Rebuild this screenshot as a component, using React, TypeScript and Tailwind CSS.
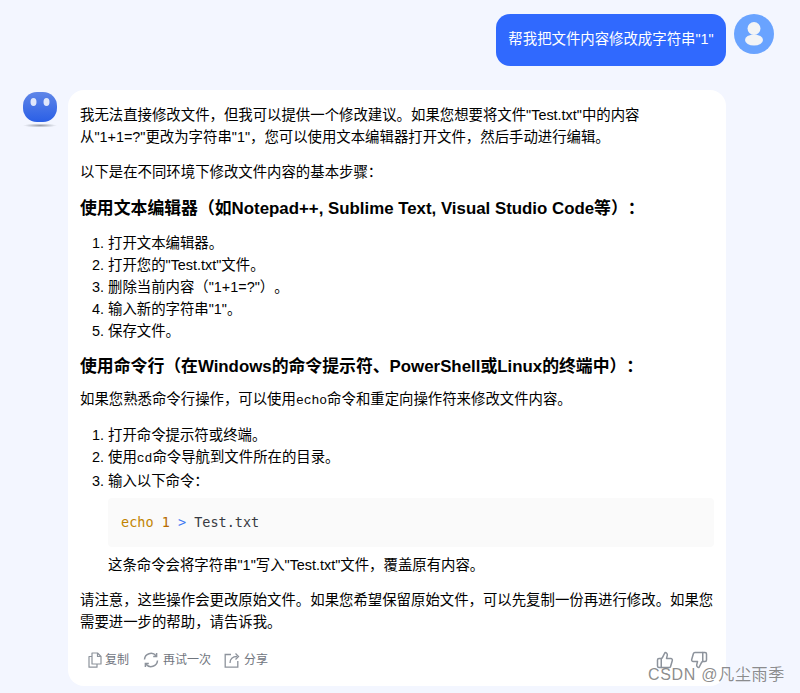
import { ThumbsDown, ThumbsUp } from 'lucide-react'

const font = { fontFamily: '"Liberation Sans", "Noto Sans CJK SC", sans-serif' }

function CopyIcon() {
  return (
    <svg width="16" height="16" viewBox="0 0 16 16" fill="none" stroke="#8d939c" strokeWidth="1.2">
      <path d="M5 1h5.5L14 4.5V12H5z" strokeLinejoin="round" />
      <path d="M10.5 1v3.5H14" strokeLinejoin="round" />
      <path d="M5 4.5H2V15.2h8V12" strokeLinejoin="round" />
    </svg>
  )
}

function RetryIcon() {
  return (
    <svg width="16" height="16" viewBox="0 0 16 16" fill="none" stroke="#8d939c" strokeWidth="1.5">
      <path d="M1.5 7.5A6.5 6.5 0 0 1 13 3.8" />
      <path d="M14.5 8.5A6.5 6.5 0 0 1 3 12.2" />
      <path d="M13.6 1v3.4h-3.4" />
      <path d="M2.4 15v-3.4h3.4" />
    </svg>
  )
}

function ShareIcon() {
  return (
    <svg width="16" height="16" viewBox="0 0 16 16" fill="none" stroke="#8d939c" strokeWidth="1.3">
      <path d="M7 2.5H1.2v12.6h12.6V9" />
      <path d="M6 11c0-4 2.5-6.500 7-6.500" />
      <path d="M11.500 1.500l3 3-3 3" />
    </svg>
  )
}

function UserAvatar() {
  return (
    <svg width="40" height="40" viewBox="0 0 40 40">
      <circle cx="20" cy="20" r="20" fill="#69a3ff" />
      <circle cx="20" cy="14.500" r="6.500" fill="#f3f4f6" />
      <ellipse cx="20" cy="26" rx="9" ry="5.500" fill="#f3f4f6" />
    </svg>
  )
}

function BotAvatar() {
  return (
    <svg width="36" height="36" viewBox="0 0 36 36">
      <defs>
        <linearGradient id="bot" x1="0" y1="0" x2="0" y2="1">
          <stop offset="0" stopColor="#5f86e8" />
          <stop offset="1" stopColor="#2a5fe6" />
        </linearGradient>
        <radialGradient id="shadow">
          <stop offset="0" stopColor="#9a9ea8" />
          <stop offset="1" stopColor="#f3f6ff" />
        </radialGradient>
      </defs>
      <rect x="1" y="0" width="34" height="30" rx="14" fill="url(#bot)" />
      <ellipse cx="11.500" cy="10" rx="3" ry="4" fill="#dfe7fb" />
      <ellipse cx="24.500" cy="10" rx="3" ry="4" fill="#dfe7fb" />
      <ellipse cx="18" cy="33.500" rx="17" ry="2" fill="url(#shadow)" />
    </svg>
  )
}

function Code({ children }: { children: string }) {
  return <code className="text-[13px] [font-family:'Liberation_Mono',monospace]">{children}</code>
}

export default function App() {
  return (
    <div
      className="relative h-[693px] w-[800px] overflow-hidden bg-[#f3f6ff] text-black [text-spacing-trim:space-all]"
      style={font}
    >
      <div className="flex justify-end gap-2 pt-[14px] pr-[26px]">
        <div className="flex h-[52px] w-[230px] items-center justify-center rounded-[14px] bg-[#3069fe] text-[14.4px] text-white">
          帮我把文件内容修改成字符串"1"
        </div>
        <UserAvatar />
      </div>

      <div className="mt-6 flex gap-[10px] pl-[22px]">
        <div className="pt-[2px]">
          <BotAvatar />
        </div>
        <div className="h-[596px] w-[658px] rounded-[16px] bg-white px-3 pt-[14px] text-[14.4px] leading-[22px]">
          <p>
            我无法直接修改文件，但我可以提供一个修改建议。如果您想要将文件"Test.txt"中的内容从"1+1=?"更改为字符串"1"，您可以使用文本编辑器打开文件，然后手动进行编辑。
          </p>
          <p className="mt-[13px]">以下是在不同环境下修改文件内容的基本步骤：</p>
          <h3 className="mt-[14px] text-[16.85px] leading-6 font-bold">
            使用文本编辑器（如Notepad++, Sublime Text, Visual Studio Code等）：
          </h3>
          <ol className="mt-[11px] list-decimal pl-7">
            <li>打开文本编辑器。</li>
            <li>打开您的"Test.txt"文件。</li>
            <li>删除当前内容（"1+1=?"）。</li>
            <li>输入新的字符串"1"。</li>
            <li>保存文件。</li>
          </ol>
          <h3 className="mt-[13px] text-[16.85px] leading-6 font-bold">
            使用命令行（在Windows的命令提示符、PowerShell或Linux的终端中）：
          </h3>
          <p className="mt-[9px]">
            如果您熟悉命令行操作，可以使用<Code>echo</Code>命令和重定向操作符来修改文件内容。
          </p>
          <ol className="mt-3 list-decimal pl-7">
            <li>打开命令提示符或终端。</li>
            <li>
              使用<Code>cd</Code>命令导航到文件所在的目录。
            </li>
            <li>输入以下命令：</li>
          </ol>
          <pre className="mt-[6px] ml-7 flex h-[49px] items-center rounded bg-[#fafafa] px-[13px] pb-px text-[13.500px] text-[#383a42] [font-family:'DejaVu_Sans_Mono',monospace]">
            <span className="text-[#c18401]">echo</span>&nbsp;<span className="text-[#b76b01]">1</span>&nbsp;<span className="text-[#4078f2]">&gt;</span>&nbsp;Test.txt
          </pre>
          <p className="mt-[7px] pl-7">这条命令会将字符串"1"写入"Test.txt"文件，覆盖原有内容。</p>
          <p className="mt-[13px]">
            请注意，这些操作会更改原始文件。如果您希望保留原始文件，可以先复制一份再进行修改。如果您需要进一步的帮助，请告诉我。
          </p>
          <div className="mt-[18px] flex items-center justify-between pr-[6px] pl-[7px] text-xs text-[#70757e]">
            <div className="flex items-center gap-[13px]">
              <span className="mr-px flex items-center gap-[2px]">
                <CopyIcon />
                复制
              </span>
              <span className="flex items-center gap-1">
                <RetryIcon />
                再试一次
              </span>
              <span className="flex items-center gap-1">
                <ShareIcon />
                分享
              </span>
            </div>
            <div className="flex items-center gap-4 text-[#8d939c]">
              <ThumbsUp size={18} />
              <ThumbsDown size={18} />
            </div>
          </div>
        </div>
      </div>

      <div className="absolute top-[665px] right-[15px] text-base leading-5 tracking-[0.7px] text-[#6f6f6f]/80">
        CSDN @凡尘雨季
      </div>
    </div>
  )
}
